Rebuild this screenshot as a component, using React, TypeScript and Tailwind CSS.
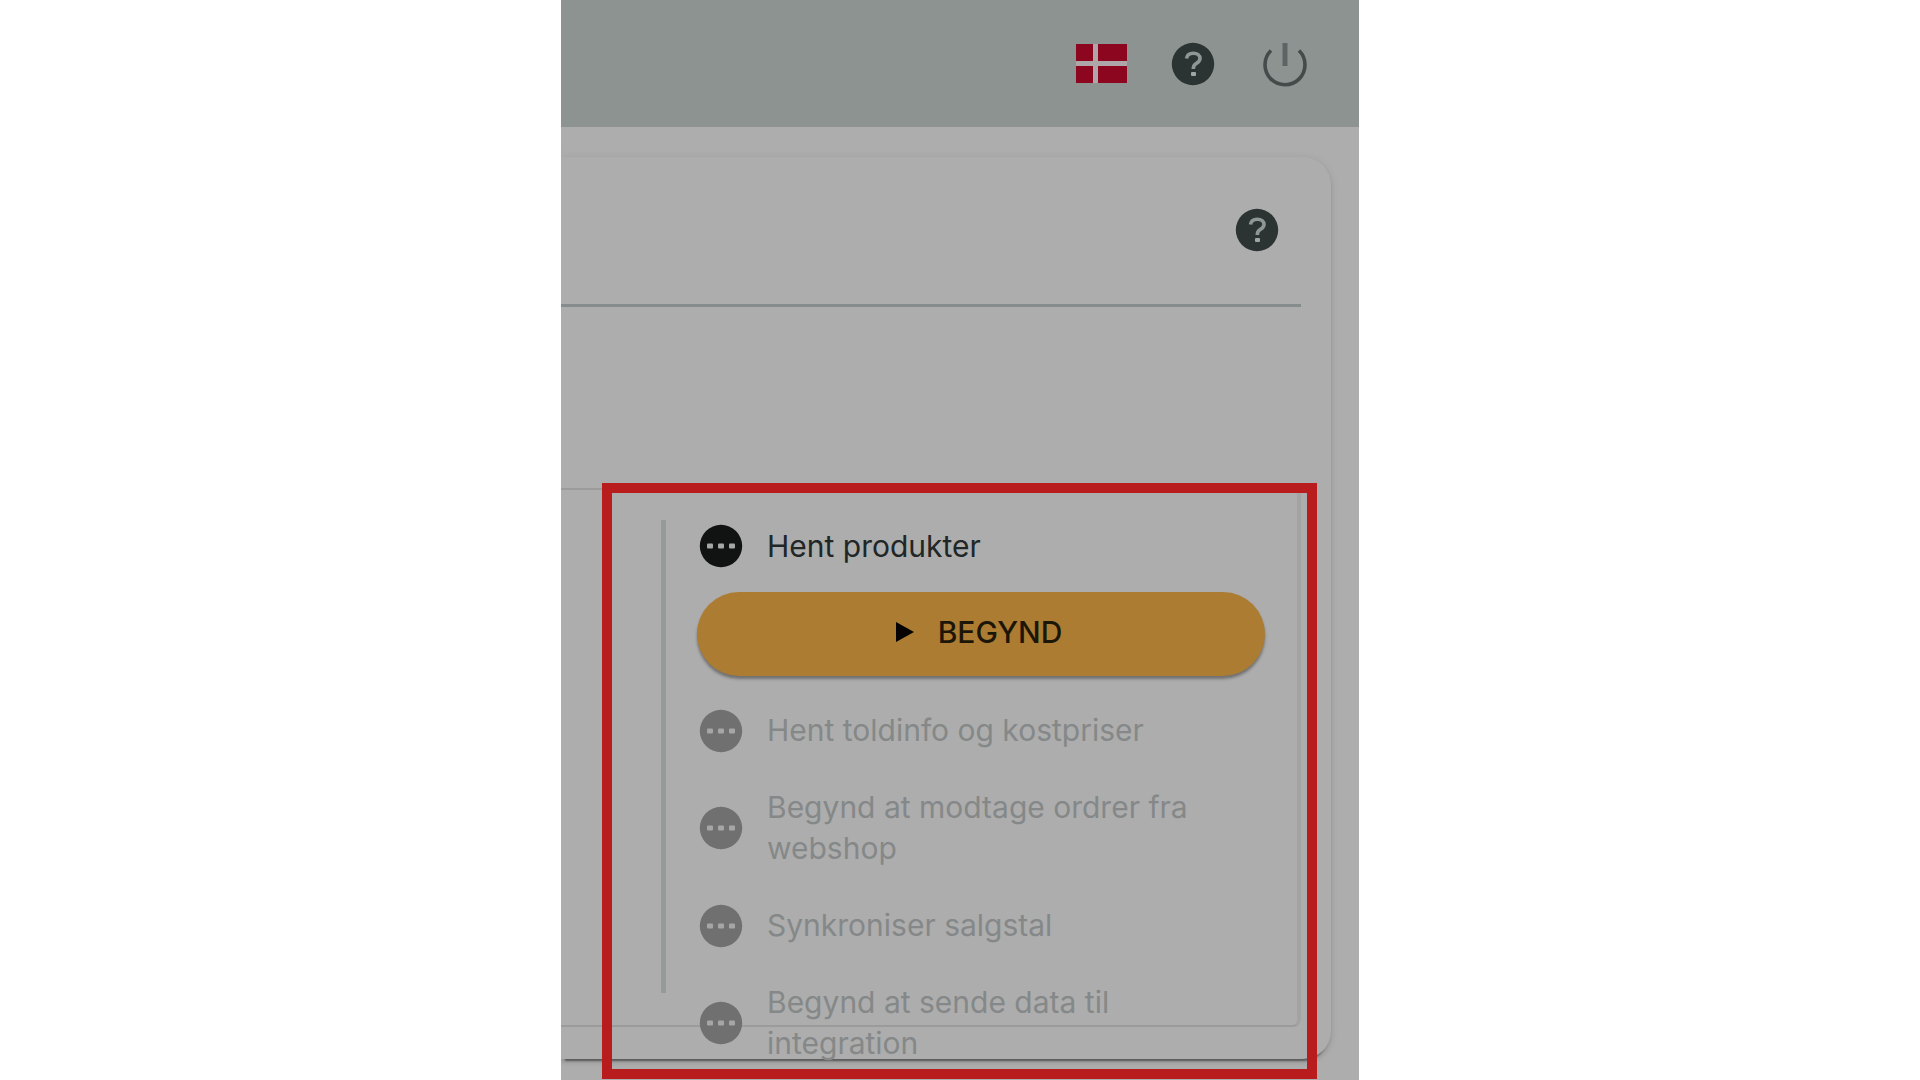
const steps = [
  { label: "Hent produkter", active: true },
  { label: "Hent toldinfo og kostpriser", active: false },
  { label: "Begynd at modtage ordrer fra webshop", active: false },
  { label: "Synkroniser salgstal", active: false },
  { label: "Begynd at sende data til integration", active: false },
];

function DanishFlag() {
  return (
    <svg viewBox="0 0 51 39" className="h-[39px] w-[51px]" aria-hidden="true">
      <rect width="51" height="39" fill="#8c0620" />
      <rect x="17" width="5" height="39" fill="#aea6a8" />
      <rect y="17" width="51" height="5" fill="#aea6a8" />
    </svg>
  );
}

function HelpIcon() {
  return (
    <svg viewBox="0 0 52 52" className="size-[52px]" fill="none" aria-hidden="true">
      <circle cx="26" cy="26" r="21.2" fill="#2b3333" />
      <path
        d="M19.5 20.5C20 16.8 22.5 15.2 26.3 15.2C30.3 15.2 33 17.3 33 20.4C33 23 31.3 24.2 29.2 25.5C27 26.8 26.3 28 26.3 31"
        stroke="#8f9796"
        strokeWidth="3.6"
      />
      <rect x="24" y="34" width="5" height="4" rx="1" fill="#a0a6a5" />
    </svg>
  );
}

function PowerIcon() {
  return (
    <svg viewBox="0 0 52 52" className="size-[52px]" fill="none" aria-hidden="true">
      <path d="M12 12.5A20 20 0 1 0 40 12.5" stroke="#454b4b" strokeWidth="3.6" />
      <path d="M26 5V28" stroke="#5d6465" strokeWidth="5" />
    </svg>
  );
}

function PendingIcon() {
  return (
    <svg viewBox="0 0 52 52" className="-ml-0.5 size-[52px] shrink-0" aria-hidden="true">
      <circle cx="26" cy="26" r="21.2" fill="currentColor" />
      <g fill="#a6a6a6">
        <rect x="12" y="23.5" width="6" height="5" rx="1" />
        <rect x="23" y="23.5" width="6" height="5" rx="1" />
        <rect x="34" y="23.5" width="6" height="5" rx="1" />
      </g>
    </svg>
  );
}

export default function App() {
  return (
    <div className="min-h-screen bg-white font-['Inter','Liberation_Sans',sans-serif]">
      <div className="mx-auto h-screen w-full max-w-[798px] overflow-hidden bg-[#adadad]">
        <header className="flex h-[127px] items-center justify-end gap-10 bg-[#8d9391] pr-12">
          <button type="button" aria-label="Dansk">
            <DanishFlag />
          </button>
          <button type="button" aria-label="Hjælp">
            <HelpIcon />
          </button>
          <button type="button" aria-label="Log ud">
            <PowerIcon />
          </button>
        </header>

        <main className="pt-[30px] pr-7">
          <section className="rounded-r-[28px] bg-[#adadad] pr-[30px] pb-8 shadow-[0_6px_2px_-4px_rgba(0,0,0,0.4),0_3px_4px_0_rgba(0,0,0,0.12),0_1px_10px_0_rgba(0,0,0,0.07)]">
            <div className="flex h-[150px] items-center justify-end border-b-[3px] border-[#868c8c] pr-[18px] pb-0.5">
              <button type="button" aria-label="Hjælp til siden">
                <HelpIcon />
              </button>
            </div>

            <div className="relative mt-[181px] flex h-[539px] justify-end rounded-r-lg border-y-2 border-r-4 border-y-[#9b9b9b] border-r-[#a3a3a3] pt-[30px] pr-8">
              <div className="mr-[31px] h-[473px] w-[5px] shrink-0 bg-[#959a9a]" />
              <ol className="w-[568px]">
                {steps.map((step) => (
                  <li key={step.label} className={step.active ? "mb-3.5" : "mb-4"}>
                    <div
                      className={
                        step.active
                          ? "flex items-center gap-5 text-[#101312]"
                          : "flex min-h-[81px] items-center gap-5 text-[#707070]"
                      }
                    >
                      <PendingIcon />
                      <span
                        className={
                          step.active
                            ? "pr-8 text-[30px] leading-[41px] text-[#212626]"
                            : "pr-8 text-[30px] leading-[41px] text-[#858888]"
                        }
                      >
                        {step.label}
                      </span>
                    </div>
                    {step.active && (
                      <button
                        type="button"
                        className="mt-5 flex h-[84px] w-full items-center justify-center gap-6 rounded-full bg-[#ac7c33] pr-1 pb-1 text-[30px] font-medium text-[#1c1608] shadow-[0_3px_3px_0_rgba(0,0,0,0.35)]"
                      >
                        <svg viewBox="0 0 18 20" className="h-5 w-[18px]" aria-hidden="true">
                          <path d="M0 0L18 10L0 20Z" fill="#050402" />
                        </svg>
                        BEGYND
                      </button>
                    )}
                  </li>
                ))}
              </ol>
              <div className="pointer-events-none absolute -top-[7px] -right-5 -bottom-[54px] left-[41px] border-[10px] border-[#b81c1c]" />
            </div>
          </section>
        </main>
      </div>
    </div>
  );
}
